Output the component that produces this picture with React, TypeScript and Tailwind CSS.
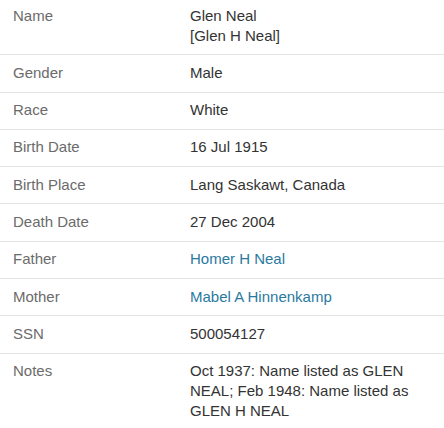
import React from 'react';

interface Fact {
    label: string;
    value: React.ReactNode;
    link?: boolean;
}

const facts: Fact[] = [
    {
        label: 'Name',
        value: (
            <>
                Glen Neal
                <br />
                [Glen H Neal]
            </>
        ),
    },
    { label: 'Gender', value: 'Male' },
    { label: 'Race', value: 'White' },
    { label: 'Birth Date', value: '16 Jul 1915' },
    { label: 'Birth Place', value: 'Lang Saskawt, Canada' },
    { label: 'Death Date', value: '27 Dec 2004' },
    { label: 'Father', value: 'Homer H Neal', link: true },
    { label: 'Mother', value: 'Mabel A Hinnenkamp', link: true },
    { label: 'SSN', value: '500054127' },
    { label: 'Notes', value: 'Oct 1937: Name listed as GLEN NEAL; Feb 1948: Name listed as GLEN H NEAL' },
];

const App: React.FC = () => {
    return (
        <div className="w-[444px] h-[428px] overflow-hidden bg-white font-['Liberation_Sans',Arial,sans-serif] text-[15px] leading-5">
            <div className="-mt-[2px]">
                {facts.map((fact, i) => (
                    <div
                        key={fact.label}
                        className={`flex pt-[7.5px] pb-[8.8px] ${i < facts.length - 1 ? 'border-b border-[#e3e3e3]' : ''}`}
                    >
                        <div className="w-[190px] shrink-0 pl-[13px] text-[#6b6b6b]">{fact.label}</div>
                        <div className={`flex-1 pr-[13px] ${fact.link ? 'text-[#2a7aa0]' : 'text-[#333333]'}`}>
                            {fact.value}
                        </div>
                    </div>
                ))}
            </div>
        </div>
    );
};

export default App;
